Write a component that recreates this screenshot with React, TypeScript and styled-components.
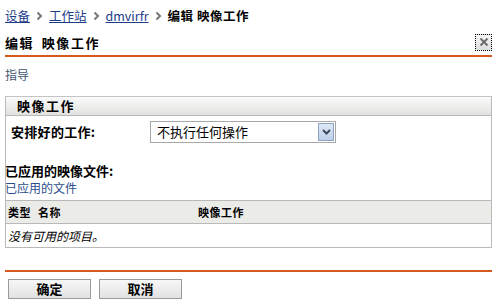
import React from "react";
import styled, { createGlobalStyle } from "styled-components";

const Global = createGlobalStyle`
  html, body { margin: 0; padding: 0; background: #fff; }
  body { font-family: "Noto Sans CJK SC", "Liberation Sans", sans-serif; font-size: 13px; color: #000; }
`;

const Page = styled.div`
  width: 500px;
  height: 301px;
  overflow: hidden;
  padding: 0 8px 0 5px;
  box-sizing: border-box;
`;

const Crumbs = styled.div`
  height: 30px;
  display: flex;
  align-items: center;
  gap: 6px;
  font-size: 12.5px;
  line-height: 14px;
  padding-top: 2px;
  box-sizing: border-box;
`;

const CrumbLink = styled.a`
  color: #1d3c8a;
  text-decoration: underline;
  cursor: pointer;
`;

const CrumbCurrent = styled.span`
  font-weight: bold;
  letter-spacing: 0.5px;
`;

const TitleBar = styled.div`
  height: 25px;
  display: flex;
  align-items: center;
  justify-content: space-between;
  border-bottom: 2px solid #d45a1e;
`;

const Title = styled.h1`
  margin: 0;
  font-size: 13px;
  font-weight: bold;
  letter-spacing: 1.6px;
  word-spacing: 3px;
`;

const CloseBtn = styled.button`
  width: 17px;
  height: 17px;
  padding: 0;
  margin-bottom: 1px;
  background: linear-gradient(#f6f6f6, #dcdcdc);
  border: 1px dotted #000;
  display: flex;
  align-items: center;
  justify-content: center;
`;

const Guide = styled.div`
  color: #3d5570;
  font-size: 12px;
  line-height: 14px;
  margin-top: 11px;
  height: 28px;
`;

const Panel = styled.div`
  border: 1px solid #b9b9b9;
  border-top: 1px solid #c4c4c4;
`;

const PanelHeader = styled.div`
  height: 18px;
  line-height: 18px;
  background: linear-gradient(#fbfbfb, #e1e1de);
  border-bottom: 1px solid #b9b9b9;
  padding-left: 11px;
  font-weight: bold;
  font-size: 13px;
  letter-spacing: 1.5px;
`;

const FieldRow = styled.div`
  display: grid;
  grid-template-columns: 139px auto;
  align-items: center;
  height: 30px;
  padding-left: 5px;
`;

const Label = styled.span`
  font-weight: bold;
  font-size: 13px;
  letter-spacing: 0.3px;
`;

const Select = styled.div`
  width: 186px;
  height: 22px;
  box-sizing: border-box;
  border: 1px solid #a8a8a8;
  display: flex;
  align-items: center;
  justify-content: space-between;
  padding-left: 6px;
  font-size: 13px;
  margin-top: 1px;
`;

const Arrow = styled.span`
  width: 16px;
  height: 18px;
  margin-right: 1px;
  box-sizing: border-box;
  border: 1px solid #8da3c4;
  background: linear-gradient(#dfe9f7, #bccfe9);
  display: flex;
  align-items: center;
  justify-content: center;
`;

const SubTitle = styled.div`
  margin-top: 16px;
  font-weight: bold;
  font-size: 13px;
  line-height: 17px;
  height: 17px;
  margin-left: -1px;
`;

const SubLink = styled.div`
  color: #2a4c8c;
  font-size: 12px;
  line-height: 18px;
  height: 18px;
  margin-left: -1px;
`;

const Table = styled.div`
  margin-top: 3px;
`;

const HeadRow = styled.div`
  display: grid;
  grid-template-columns: 190px 1fr;
  height: 22px;
  align-items: center;
  background: #ebebe8;
  border-top: 1px solid #b9b9b9;
  border-bottom: 1px solid #b9b9b9;
  padding-left: 2px;
  font-weight: bold;
  font-size: 11px;
`;

const HeadCell = styled.span`
  letter-spacing: 0.5px;
  word-spacing: 4px;
`;

const EmptyRow = styled.div`
  height: 23px;
  line-height: 23px;
  padding-left: 2px;
  font-style: italic;
  font-size: 12px;
`;

const Footer = styled.div`
  margin-top: 22px;
  border-top: 2px solid #d45a1e;
  padding: 7px 0 0 3px;
  display: flex;
  gap: 8px;
`;

const Button = styled.button`
  width: 83px;
  height: 20px;
  padding: 0;
  border: 1px solid #9a9a9a;
  background: linear-gradient(#f7f7f7, #e2e2e2);
  font-family: inherit;
  font-weight: bold;
  font-size: 13px;
  color: #000;
  line-height: 18px;
`;

const Chevron = () => (
  <svg width="7" height="10" viewBox="0 0 7 10">
    <path d="M1.5 1.5 L5 5 L1.5 8.5" fill="none" stroke="#777" strokeWidth="2" />
  </svg>
);

export default function App() {
  return (
    <>
      <Global />
      <Page>
        <Crumbs>
          <CrumbLink>设备</CrumbLink>
          <Chevron />
          <CrumbLink>工作站</CrumbLink>
          <Chevron />
          <CrumbLink>dmvirfr</CrumbLink>
          <Chevron />
          <CrumbCurrent>编辑 映像工作</CrumbCurrent>
        </Crumbs>
        <TitleBar>
          <Title>编辑 映像工作</Title>
          <CloseBtn aria-label="close">
            <svg width="10" height="10" viewBox="0 0 10 10">
              <path d="M1.5 1.5 L8.5 8.5 M8.5 1.5 L1.5 8.5" stroke="#6a6a6a" strokeWidth="1.8" />
            </svg>
          </CloseBtn>
        </TitleBar>
        <Guide>指导</Guide>
        <Panel>
          <PanelHeader>映像工作</PanelHeader>
          <FieldRow>
            <Label>安排好的工作:</Label>
            <Select>
              <span>不执行任何操作</span>
              <Arrow>
                <svg width="9" height="6" viewBox="0 0 9 6">
                  <path d="M1 1 L4.5 4.5 L8 1" fill="none" stroke="#3c4a5c" strokeWidth="2" />
                </svg>
              </Arrow>
            </Select>
          </FieldRow>
          <SubTitle>已应用的映像文件:</SubTitle>
          <SubLink>已应用的文件</SubLink>
          <Table>
            <HeadRow>
              <HeadCell>类型 名称</HeadCell>
              <HeadCell>映像工作</HeadCell>
            </HeadRow>
            <EmptyRow>没有可用的项目。</EmptyRow>
          </Table>
        </Panel>
        <Footer>
          <Button>确定</Button>
          <Button>取消</Button>
        </Footer>
      </Page>
    </>
  );
}
